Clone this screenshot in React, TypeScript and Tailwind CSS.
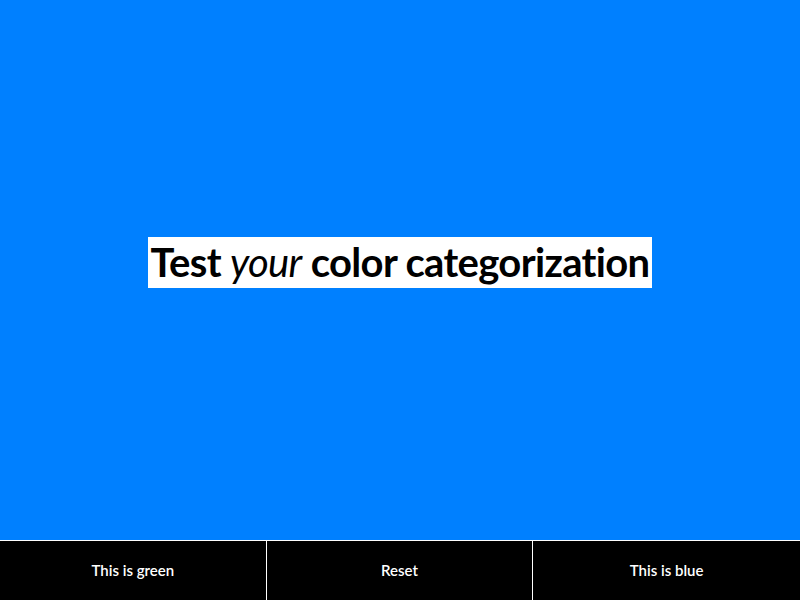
export default function App() {
  return (
    <div className="flex h-[600px] w-[800px] flex-col bg-[#0080ff] font-['Lato',sans-serif]">
      <div className="flex flex-1 items-center justify-center pb-[15px]">
        <h1 className="bg-white px-[2px] text-[40px] font-bold leading-[51px] tracking-[-0.65px] text-black">
          Test <em className="font-normal">your</em> color categorization
        </h1>
      </div>
      <div className="grid h-[60px] grid-cols-3 border-t border-white bg-black text-[15px] font-semibold text-white">
        <button className="border-r border-white">This is green</button>
        <button className="border-r border-white">Reset</button>
        <button>This is blue</button>
      </div>
    </div>
  );
}
